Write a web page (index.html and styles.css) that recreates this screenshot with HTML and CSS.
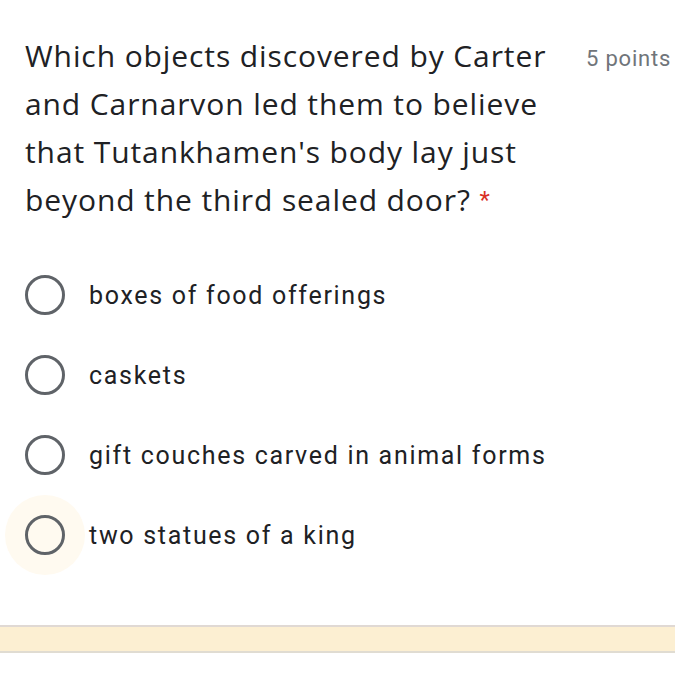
FILE: index.html
```html
<!DOCTYPE html>
<html>
<head>
<meta charset="utf-8">
<link rel="stylesheet" href="styles.css">
</head>
<body>
<div class="card">
  <div class="header">
    <div class="title">Which objects discovered by Carter and Carnarvon led them to believe that Tutankhamen's body lay just beyond the third sealed door? <span class="req">*</span></div>
    <div class="points">5 points</div>
  </div>
  <div class="options">
    <div class="option"><span class="radio-wrap"><span class="radio"></span></span><span class="label">boxes of food offerings</span></div>
    <div class="option"><span class="radio-wrap"><span class="radio"></span></span><span class="label">caskets</span></div>
    <div class="option"><span class="radio-wrap"><span class="radio"></span></span><span class="label">gift couches carved in animal forms</span></div>
    <div class="option"><span class="radio-wrap halo"><span class="radio"></span></span><span class="label">two statues of a king</span></div>
  </div>
  <div class="band"></div>
</div>
</body>
</html>
```
FILE: styles.css
```css
html, body {
  margin: 0;
  padding: 0;
  background: #ffffff;
}
.card {
  width: 675px;
  height: 673px;
  overflow: hidden;
  display: flex;
  flex-direction: column;
}
.header {
  display: flex;
  align-items: flex-start;
  padding: 32px 0 0 25px;
}
.title {
  width: 540px;
  flex: none;
  font-family: "Open Sans", sans-serif;
  font-size: 30px;
  letter-spacing: 0.9px;
  line-height: 48px;
  color: #202124;
}
.title-end {
  letter-spacing: 0.5px;
}
.req {
  color: #d93025;
  font-family: Roboto, sans-serif;
  font-size: 24px;
  letter-spacing: 0;
  vertical-align: 3px;
}
.points {
  margin-left: 21px;
  padding-top: 14px;
  font-family: Roboto, sans-serif;
  font-size: 22px;
  letter-spacing: 0.8px;
  line-height: 26px;
  color: #70757a;
  white-space: nowrap;
}
.options {
  display: flex;
  flex-direction: column;
  padding: 31px 0 0 5px;
}
.option {
  display: flex;
  align-items: center;
  height: 80px;
}
.radio-wrap {
  width: 80px;
  height: 80px;
  border-radius: 50%;
  display: flex;
  align-items: center;
  justify-content: center;
  flex: none;
}
.radio-wrap.halo {
  background: #fffaf0;
}
.radio {
  border: 3px solid #5f6368;
  border-radius: 50%;
  box-sizing: border-box;
  width: 40px;
  height: 40px;
}
.label {
  margin-left: 4px;
  font-family: Roboto, sans-serif;
  font-size: 25px;
  letter-spacing: 1.7px;
  color: #202124;
}
.band {
  margin-top: 50px;
  height: 24px;
  background: #fcefd2;
  border-top: 2px solid #e0d9d4;
  border-bottom: 2px solid #e0dcd2;
}
```
